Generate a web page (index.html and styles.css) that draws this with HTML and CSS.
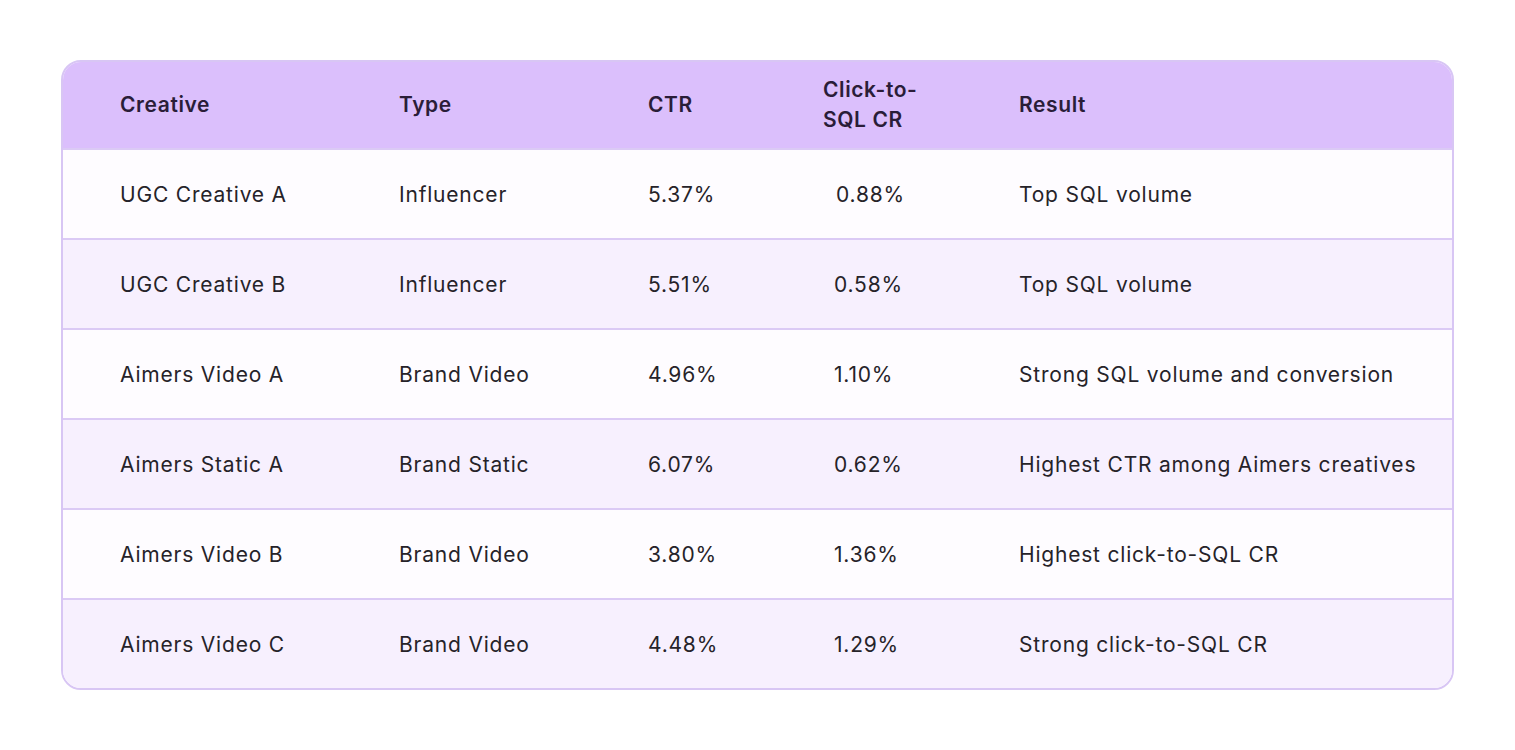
FILE: index.html
```html
<!DOCTYPE html>
<html>
<head>
<meta charset="utf-8">
<link rel="stylesheet" href="styles.css">
</head>
<body>
<div class="table">
  <div class="row head">
    <div class="cell">Creative</div>
    <div class="cell">Type</div>
    <div class="cell">CTR</div>
    <div class="cell">Click-to-<br>SQL CR</div>
    <div class="cell">Result</div>
  </div>
  <div class="row">
    <div class="cell">UGC Creative A</div>
    <div class="cell">Influencer</div>
    <div class="cell">5.37%</div>
    <div class="cell cr first">0.88%</div>
    <div class="cell">Top SQL volume</div>
  </div>
  <div class="row alt">
    <div class="cell">UGC Creative B</div>
    <div class="cell">Influencer</div>
    <div class="cell">5.51%</div>
    <div class="cell cr">0.58%</div>
    <div class="cell">Top SQL volume</div>
  </div>
  <div class="row">
    <div class="cell">Aimers Video A</div>
    <div class="cell">Brand Video</div>
    <div class="cell">4.96%</div>
    <div class="cell cr">1.10%</div>
    <div class="cell">Strong SQL volume and conversion</div>
  </div>
  <div class="row alt">
    <div class="cell">Aimers Static A</div>
    <div class="cell">Brand Static</div>
    <div class="cell">6.07%</div>
    <div class="cell cr">0.62%</div>
    <div class="cell">Highest CTR among Aimers creatives</div>
  </div>
  <div class="row">
    <div class="cell">Aimers Video B</div>
    <div class="cell">Brand Video</div>
    <div class="cell">3.80%</div>
    <div class="cell cr">1.36%</div>
    <div class="cell">Highest click-to-SQL CR</div>
  </div>
  <div class="row alt">
    <div class="cell">Aimers Video C</div>
    <div class="cell">Brand Video</div>
    <div class="cell">4.48%</div>
    <div class="cell cr">1.29%</div>
    <div class="cell">Strong click-to-SQL CR</div>
  </div>
</div>
</body>
</html>
```
FILE: styles.css
```css
html, body {
  margin: 0;
  padding: 0;
  background: #ffffff;
}
body {
  padding: 60px 0 0 61px;
  font-family: Inter, "Noto Sans", sans-serif;
  color: #262329;
}
.table {
  width: 1393px;
  box-sizing: border-box;
  border: 2px solid #d8c6f4;
  border-radius: 20px;
  overflow: hidden;
  background: #fefcff;
}
.row {
  display: grid;
  grid-template-columns: 279px 249px 175px 196px 1fr;
  height: 90px;
  align-items: center;
  border-top: 2px solid #dbcaf5;
  box-sizing: border-box;
}
.row.head {
  border-top: none;
  height: 86px;
  background: #dbbffc;
  font-weight: 600;
  color: #2a1d38;
  line-height: 30px;
}
.row.alt {
  background: #f7f0fe;
}
.cell {
  padding-left: 57px;
  font-size: 21px;
  letter-spacing: 0.8px;
}
.head .cell {
  letter-spacing: 0.6px;
}
.cell.cr {
  padding-left: 68px;
}
.cell.cr.first {
  padding-left: 70px;
}
```
